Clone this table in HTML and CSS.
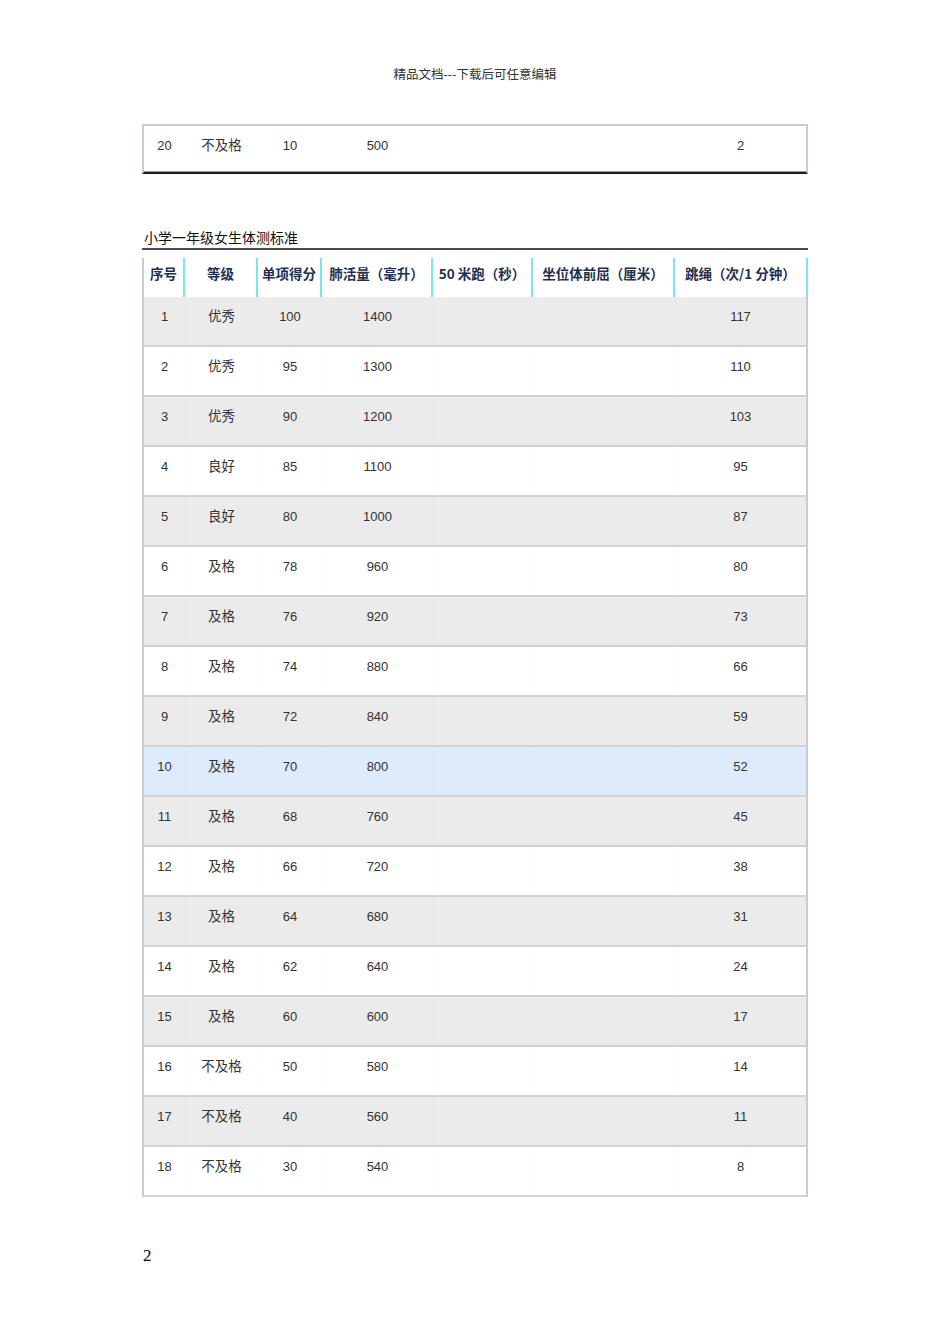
FILE: index.html
```html
<!DOCTYPE html>
<html lang="zh">
<head>
<meta charset="utf-8">
<title>小学一年级女生体测标准</title>
<link rel="stylesheet" href="styles.css">
</head>
<body>
<div class="page">
  <div class="doc-header">精品文档---下载后可任意编辑</div>

  <table class="grid top-table">
    <colgroup>
      <col class="c1"><col class="c2"><col class="c3"><col class="c4"><col class="c5"><col class="c6"><col class="c7">
    </colgroup>
    <tbody>
      <tr class="white last"><td>20</td><td class="cn">不及格</td><td>10</td><td>500</td><td></td><td></td><td>2</td></tr>
    </tbody>
  </table>

  <div class="section-title">小学一年级女生体测标准</div>

  <table class="grid main-table">
    <colgroup>
      <col class="c1"><col class="c2"><col class="c3"><col class="c4"><col class="c5"><col class="c6"><col class="c7">
    </colgroup>
    <thead>
      <tr>
        <th>序号</th><th>等级</th><th>单项得分</th><th>肺活量（毫升）</th><th>50 米跑（秒）</th><th>坐位体前屈（厘米）</th><th>跳绳（次/1 分钟）</th>
      </tr>
    </thead>
    <tbody>
      <tr class="grey"><td>1</td><td class="cn">优秀</td><td>100</td><td>1400</td><td></td><td></td><td>117</td></tr>
      <tr class="white"><td>2</td><td class="cn">优秀</td><td>95</td><td>1300</td><td></td><td></td><td>110</td></tr>
      <tr class="grey"><td>3</td><td class="cn">优秀</td><td>90</td><td>1200</td><td></td><td></td><td>103</td></tr>
      <tr class="white"><td>4</td><td class="cn">良好</td><td>85</td><td>1100</td><td></td><td></td><td>95</td></tr>
      <tr class="grey"><td>5</td><td class="cn">良好</td><td>80</td><td>1000</td><td></td><td></td><td>87</td></tr>
      <tr class="white"><td>6</td><td class="cn">及格</td><td>78</td><td>960</td><td></td><td></td><td>80</td></tr>
      <tr class="grey"><td>7</td><td class="cn">及格</td><td>76</td><td>920</td><td></td><td></td><td>73</td></tr>
      <tr class="white"><td>8</td><td class="cn">及格</td><td>74</td><td>880</td><td></td><td></td><td>66</td></tr>
      <tr class="grey"><td>9</td><td class="cn">及格</td><td>72</td><td>840</td><td></td><td></td><td>59</td></tr>
      <tr class="blue"><td>10</td><td class="cn">及格</td><td>70</td><td>800</td><td></td><td></td><td>52</td></tr>
      <tr class="grey"><td>11</td><td class="cn">及格</td><td>68</td><td>760</td><td></td><td></td><td>45</td></tr>
      <tr class="white"><td>12</td><td class="cn">及格</td><td>66</td><td>720</td><td></td><td></td><td>38</td></tr>
      <tr class="grey"><td>13</td><td class="cn">及格</td><td>64</td><td>680</td><td></td><td></td><td>31</td></tr>
      <tr class="white"><td>14</td><td class="cn">及格</td><td>62</td><td>640</td><td></td><td></td><td>24</td></tr>
      <tr class="grey"><td>15</td><td class="cn">及格</td><td>60</td><td>600</td><td></td><td></td><td>17</td></tr>
      <tr class="white"><td>16</td><td class="cn">不及格</td><td>50</td><td>580</td><td></td><td></td><td>14</td></tr>
      <tr class="grey"><td>17</td><td class="cn">不及格</td><td>40</td><td>560</td><td></td><td></td><td>11</td></tr>
      <tr class="white"><td>18</td><td class="cn">不及格</td><td>30</td><td>540</td><td></td><td></td><td>8</td></tr>
    </tbody>
  </table>

  <div class="page-number">2</div>
</div>
</body>
</html>
```

FILE: styles.css
```css
html, body {
  margin: 0;
  padding: 0;
  background: #ffffff;
}

.page {
  width: 950px;
  min-height: 1344px;
  box-sizing: border-box;
  padding: 66px 0 0 142px;
  font-family: "Liberation Sans", "Noto Sans CJK SC", sans-serif;
  color: #333333;
}

.doc-header {
  width: 666px;
  text-align: center;
  font-family: "Noto Sans CJK SC", sans-serif;
  font-size: 12.5px;
  line-height: 16px;
  color: #333333;
  margin-bottom: 42px;
}

.grid {
  width: 666px;
  table-layout: fixed;
  border-collapse: separate;
  border-spacing: 0;
}

.c1 { width: 43px; }
.c2 { width: 73px; }
.c3 { width: 64px; }
.c4 { width: 111px; }
.c5 { width: 100px; }
.c6 { width: 142px; }
.c7 { width: 133px; }

.grid td {
  height: 50px;
  box-sizing: border-box;
  padding: 12px 0 0 0;
  vertical-align: top;
  text-align: center;
  font-size: 13px;
  line-height: 16px;
  color: #333333;
  border-bottom: 2px solid #d2d2d2;
}

.main-table td + td {
  box-shadow: inset 1px 0 0 rgba(0, 0, 0, 0.012);
}

.grid td.cn {
  font-family: "Noto Sans CJK SC", sans-serif;
  font-size: 13.5px;
  padding-top: 10px;
}

.grid td:first-child {
  border-left: 2px solid #c6ccd6;
}

.grid td:last-child {
  border-right: 2px solid #c6ccd6;
}

.grid tr.grey td { background: #ebebeb; }
.grid tr.white td { background: #ffffff; }
.grid tr.blue td { background: #deebfc; }

.top-table tr td {
  height: 50px;
  border-top: 2px solid #c6ccd6;
  border-bottom: 2px solid #1e1e1e;
  padding-top: 12px;
  box-shadow: inset 0 -1px 0 #9a9a9a;
}

.top-table tr td.cn {
  padding-top: 10px;
}

.section-title {
  width: 664px;
  margin-top: 54px;
  font-family: "Noto Sans CJK SC", sans-serif;
  font-size: 14px;
  line-height: 18px;
  color: #111111;
  padding-left: 2px;
  padding-bottom: 2px;
  border-bottom: 2px solid #4a4a4a;
  margin-bottom: 8px;
}

.main-table th {
  height: 39px;
  box-sizing: border-box;
  padding: 6px 0 0 0;
  vertical-align: top;
  text-align: center;
  font-family: "Noto Sans CJK SC", sans-serif;
  font-weight: bold;
  font-size: 13.5px;
  line-height: 18px;
  color: #1f2f4f;
  background: #ffffff;
  border-right: 2px solid #78e6ee;
  white-space: nowrap;
}

.main-table th:first-child {
  border-left: 2px solid #c6ccd6;
}

.page-number {
  margin-top: 49px;
  padding-left: 1px;
  font-family: "Liberation Serif", serif;
  font-size: 17px;
  line-height: 20px;
  color: #000000;
}
```
